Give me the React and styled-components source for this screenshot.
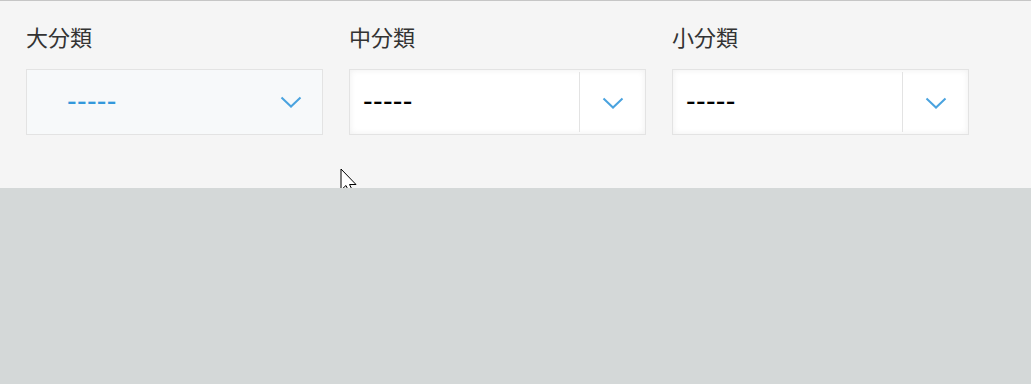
import React from "react";
import styled, { createGlobalStyle } from "styled-components";

const Global = createGlobalStyle`
  html, body { margin: 0; padding: 0; background: #d4d8d8; }
  body { font-family: "Noto Sans CJK JP", "Noto Sans", sans-serif; }
`;

const Panel = styled.div`
  position: relative;
  box-sizing: border-box;
  height: 188px;
  border-top: 1px solid #c6c6c6;
  background: #f5f5f5;
  padding: 21px 26px 0;
  display: flex;
  gap: 26px;
`;

const Field = styled.div`
  display: flex;
  flex-direction: column;
  width: 297px;
`;

const Label = styled.div`
  font-size: 22px;
  line-height: 28px;
  color: #333;
  height: 28px;
  margin-bottom: 19px;
`;

const SelectBox = styled.div`
  box-sizing: border-box;
  width: 297px;
  height: 66px;
  border: 1px solid #e3e3e3;
  display: flex;
  align-items: stretch;
  background: ${(p) => (p.$active ? "#f7f9fa" : "#fff")};
  box-shadow: ${(p) => (p.$active ? "none" : "inset 0 0 6px rgba(0,0,0,0.07)")};
`;

const Value = styled.div`
  flex: 1;
  display: flex;
  align-items: center;
  padding-left: ${(p) => (p.$active ? "40px" : "13px")};
  padding-bottom: 2px;
  font-family: "Liberation Sans", sans-serif;
  font-size: 29px;
  letter-spacing: 0.3px;
  color: ${(p) => (p.$active ? "#3498db" : "#000")};
`;

const Toggle = styled.div`
  width: ${(p) => (p.$active ? "auto" : "65px")};
  padding-right: ${(p) => (p.$active ? "20px" : "0")};
  display: flex;
  align-items: center;
  justify-content: center;
  margin: 2px 0;
  border-left: ${(p) => (p.$active ? "none" : "1px solid #e3e3e3")};
  padding-top: ${(p) => (p.$active ? "0" : "2px")};
`;

const Cursor = styled.svg`
  position: absolute;
  left: 340px;
  top: 167px;
`;

const Chevron = () => (
  <svg width="22" height="12" viewBox="0 0 22 12">
    <polyline
      points="1.5,1.5 11,10.5 20.5,1.5"
      fill="none"
      stroke="#4aa3df"
      strokeWidth="2"
    />
  </svg>
);

const fields = [
  { label: "大分類", active: true },
  { label: "中分類", active: false },
  { label: "小分類", active: false },
];

export default function App() {
  return (
    <>
      <Global />
      <Panel>
        {fields.map((f) => (
          <Field key={f.label}>
            <Label>{f.label}</Label>
            <SelectBox $active={f.active}>
              <Value $active={f.active}>-----</Value>
              <Toggle $active={f.active}>
                <Chevron />
              </Toggle>
            </SelectBox>
          </Field>
        ))}
        <Cursor width="20" height="28" viewBox="0 0 20 28">
          <path
            d="M1 1 L1 22 L6 17.5 L10 26 L13.5 24.5 L9.5 16.5 L16 16.5 Z"
            fill="#fff"
            stroke="#000"
            strokeWidth="1"
            strokeLinejoin="miter"
          />
        </Cursor>
      </Panel>
    </>
  );
}
